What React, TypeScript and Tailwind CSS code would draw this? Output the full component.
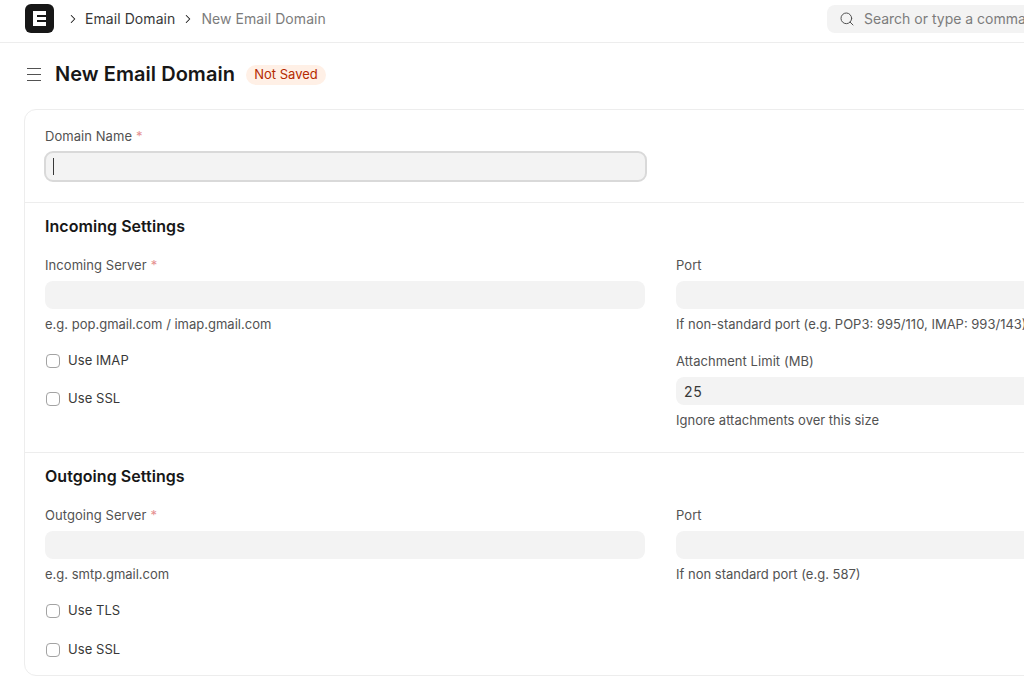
import { ChevronRight, Search } from 'lucide-react'
import type { ReactNode } from 'react'

function Label({ text, required }: { text: string; required?: boolean }) {
	return (
		<div className="h-[18px] text-[13px] leading-[18px] tracking-[0.06px] text-[#525252]">
			{text}
			{required && <span className="ml-[4px] text-[#e58f8f]">*</span>}
		</div>
	)
}

function Field({
	label,
	required,
	value,
	help,
}: {
	label: string
	required?: boolean
	value?: string
	help?: string
}) {
	return (
		<div className="flex flex-col">
			<Label text={label} required={required} />
			<div className="mt-[7px] flex h-[28px] items-center rounded-lg bg-[#f3f3f3] px-2 text-[14px] tracking-[0.7px] text-[#383838]">
				{value}
			</div>
			{help && (
				<div className="mt-[6px] h-[18px] whitespace-nowrap text-[13px] leading-[18px] text-[#525252]">
					{help}
				</div>
			)}
		</div>
	)
}

function Check({ label }: { label: string }) {
	return (
		<div className="flex h-[18px] items-center gap-[8px] pl-px">
			<div className="h-[14px] w-[14px] rounded-[4px] border border-[#a3a3a3] bg-white" />
			<span className="text-[13px] tracking-[0.06px] text-[#383838]">{label}</span>
		</div>
	)
}

function Section({ title, left, right }: { title: string; left: ReactNode; right: ReactNode }) {
	return (
		<section className="border-t border-[#ededed] px-5 pt-[13px]">
			<h2 className="h-[20px] text-[16px] leading-[20px] font-semibold tracking-[0.05px] text-[#171717]">
				{title}
			</h2>
			<div className="mt-[20px] grid grid-cols-[600px_600px] gap-x-[31px]">
				<div>{left}</div>
				<div>{right}</div>
			</div>
		</section>
	)
}

export default function App() {
	return (
		<div className="h-[679px] w-[1024px] overflow-hidden bg-white font-['Inter',sans-serif]">
			<div className="w-[1320px]">
				<header className="flex h-[43px] items-center border-b border-[#ededed] pb-[5px] pl-[25px]">
					<div className="flex h-[29px] w-[29px] items-center justify-center rounded-[6px] bg-[#171717]">
						<svg width="13" height="15" viewBox="0 0 13 15" fill="none">
							<path d="M0 0H13V4H4V6H13V9H4V11H13V15H0Z" fill="#fff" />
						</svg>
					</div>
					<ChevronRight className="ml-[12px] h-[14px] w-[14px] text-[#171717]" strokeWidth={1.75} />
					<span className="ml-[5px] text-[14px] tracking-[0.07px] text-[#383838]">Email Domain</span>
					<ChevronRight className="ml-[6px] h-[14px] w-[14px] text-[#171717]" strokeWidth={1.75} />
					<span className="ml-[6px] text-[14px] tracking-[0.07px] text-[#7c7c7c]">New Email Domain</span>
					<div className="ml-[501px] flex h-[28px] w-[400px] items-center rounded-lg bg-[#f3f3f3] pl-[12px]">
						<Search className="h-[16px] w-[16px] text-[#525252]" strokeWidth={1.5} />
						<span className="ml-[9px] text-[14px] text-[#7c7c7c]">Search or type a command</span>
					</div>
				</header>

				<div className="flex h-[66px] items-center pb-[4px] pl-[27px]">
					<div className="flex w-[14px] flex-col gap-[5px]">
						<div className="h-px bg-[#525252]" />
						<div className="h-px bg-[#525252]" />
						<div className="h-px bg-[#525252]" />
					</div>
					<h1 className="ml-[14px] text-[20px] leading-[24px] font-semibold tracking-[0.05px] text-[#171717]">
						New Email Domain
					</h1>
					<span className="mt-[1px] ml-[11px] flex h-[20px] w-[80px] items-center justify-center rounded-[10px] bg-[#fff0e6] text-[13px] text-[#b52a00]">
						Not Saved
					</span>
				</div>

				<main className="ml-[24px] h-[567px] w-[1272px] rounded-xl border border-[#ededed]">
					<div className="h-[92px] px-5 pt-[17px]">
						<Label text="Domain Name" required />
						<div className="mt-[6px] flex h-[31px] w-[603px] -translate-x-px items-center rounded-[9px] border-2 border-[#d9d9d9] bg-[#f3f3f3] pl-[7px]">
							<div className="h-[17px] w-px bg-[#383838]" />
						</div>
					</div>

					<div className="h-[250px]">
						<Section
							title="Incoming Settings"
							left={
								<>
									<Field
										label="Incoming Server"
										required
										help="e.g. pop.gmail.com / imap.gmail.com"
									/>
									<div className="mt-[19px] flex flex-col gap-[20px]">
										<Check label="Use IMAP" />
										<Check label="Use SSL" />
									</div>
								</>
							}
							right={
								<div className="flex flex-col gap-[19px]">
									<Field label="Port" help="If non-standard port (e.g. POP3: 995/110, IMAP: 993/143)" />
									<Field label="Attachment Limit (MB)" value="25" help="Ignore attachments over this size" />
								</div>
							}
						/>
					</div>

					<Section
						title="Outgoing Settings"
						left={
							<>
								<Field label="Outgoing Server" required help="e.g. smtp.gmail.com" />
								<div className="mt-[19px] flex flex-col gap-[21px]">
									<Check label="Use TLS" />
									<Check label="Use SSL" />
								</div>
							</>
						}
						right={<Field label="Port" help="If non standard port (e.g. 587)" />}
					/>
				</main>
			</div>
		</div>
	)
}
